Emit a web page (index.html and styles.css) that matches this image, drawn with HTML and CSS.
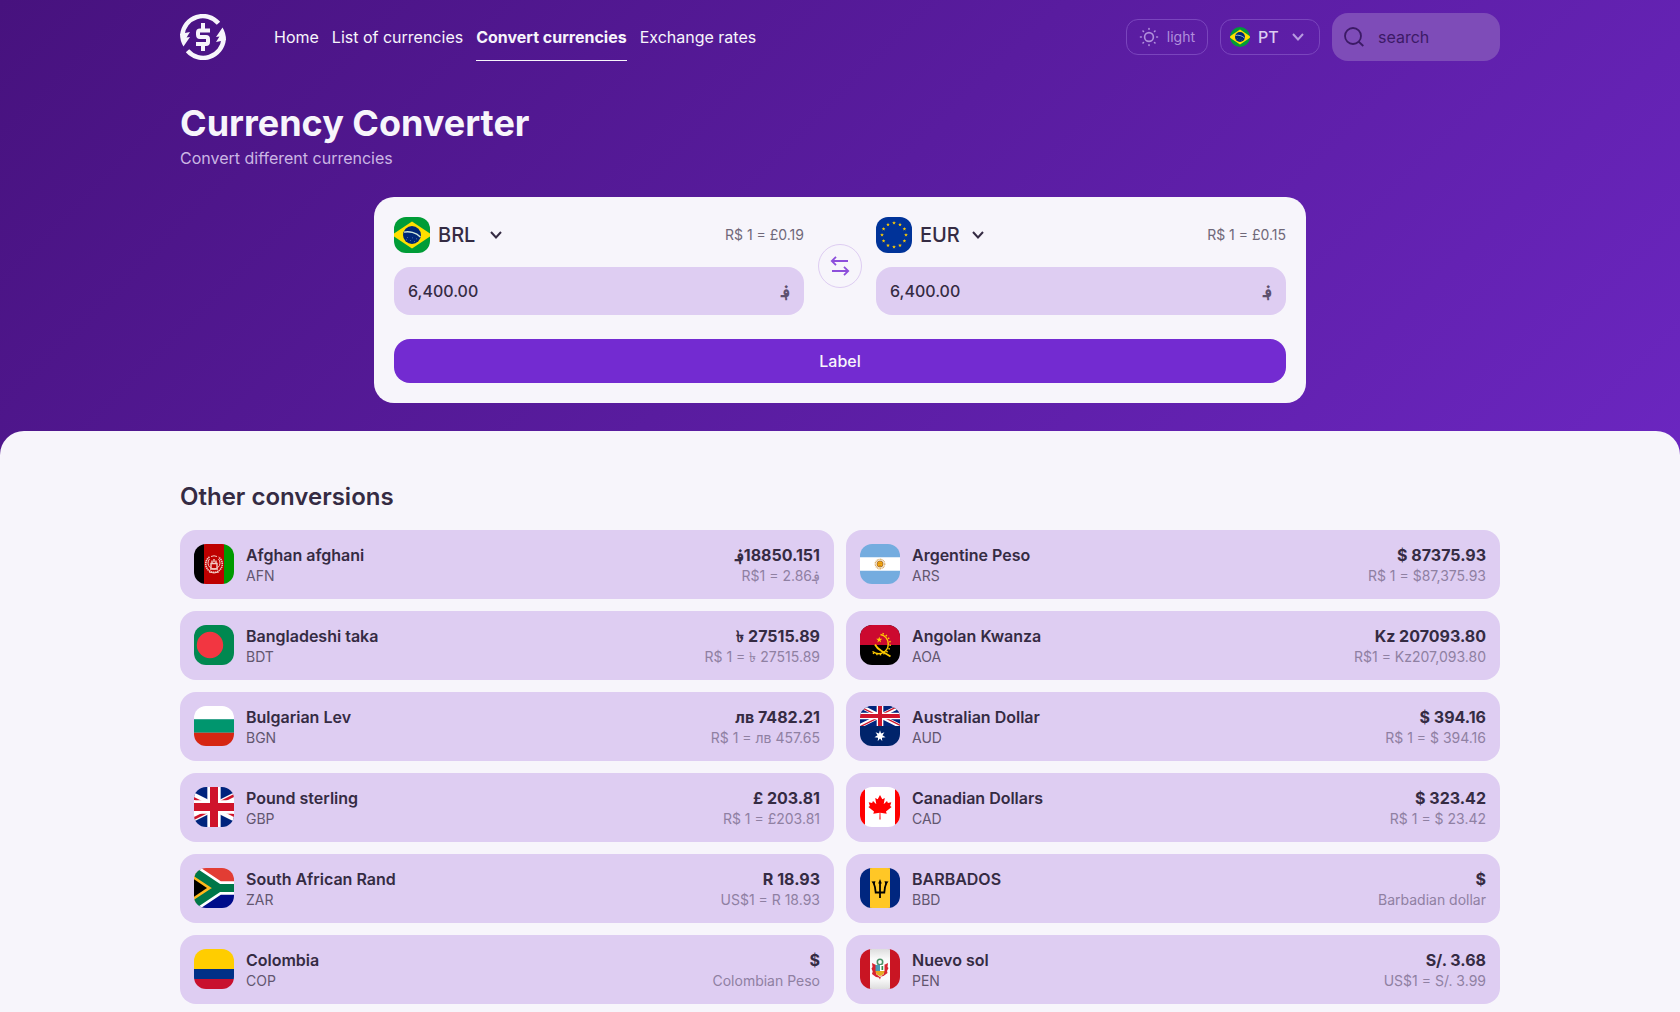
FILE: index.html
```
<!DOCTYPE html>
<html lang="en">
<head>
  <meta charset="utf-8">
  <meta name="viewport" content="width=device-width, initial-scale=1">
  <title>Currency Converter</title>
  <link rel="stylesheet" href="styles.css">
</head>
<body>

<svg class="sprite" width="0" height="0" aria-hidden="true">
  <symbol id="flag-br" viewBox="0 0 36 36">
    <path fill="#009c37" d="M0 0h36v36H0z"/>
    <path fill="#ffdf00" d="M18 4.500L36 16.500v3L18 31.500L0 19.500v-3z"/>
    <circle cx="18" cy="18" r="9" fill="#002776"/>
    <path fill="none" stroke="#cfe8dc" stroke-width="1.300" d="M10 15.200c5-1.300 12 .3 16.400 4.800"/>
    <path fill="#8fa3d0" d="M13 20h.7v.7H13zM16 23h.7v.7H16zM20 24h.7v.7H20zM12 22.500h.7v.7H12zM22 21.500h.7v.7H22zM18 20.500h.7v.7H18z"/>
  </symbol>
  <symbol id="union" viewBox="0 0 60 30">
    <clipPath id="union-clip"><path d="M30 15h30v15zv15H0zH0V0zV0h30z"/></clipPath>
    <path fill="#00247d" d="M0 0h60v30H0z"/>
    <path stroke="#fff" stroke-width="6" d="M0 0l60 30m0-30L0 30"/>
    <path stroke="#cf142b" stroke-width="4" clip-path="url(#union-clip)" d="M0 0l60 30m0-30L0 30"/>
    <path stroke="#fff" stroke-width="10" d="M30 0v30M0 15h60"/>
    <path stroke="#cf142b" stroke-width="6" d="M30 0v30M0 15h60"/>
  </symbol>
  <symbol id="star" viewBox="-10 -10 20 20">
    <path d="M0-10L2.300-3.200h7.200L3.700 1.200l2.200 6.900L0 3.900l-5.900 4.200 2.200-6.900-5.800-4.400h7.200z"/>
  </symbol>
</svg>

<div class="hero">
  <header class="container topbar">
    <a class="logo" href="#" aria-label="Currency Converter">
      <svg viewBox="0 0 46 46" width="46" height="46" fill="none">
        <path stroke="#f7f5fb" stroke-width="4.500" d="M2.300 21A20.700 20.700 0 0 1 38.500 9.200M43.700 25A20.700 20.700 0 0 1 7.500 36.800"/>
        <path fill="#f7f5fb" d="M0 20l10-2-3.500 5.500L10 23 3.500 32.500Q0 27 0 20zM46 26l-10 2 3.500-5.500L36 23l6.500-9.500Q46 19 46 26z"/>
        <path stroke="#f7f5fb" stroke-width="4" d="M30 16.500H20q-2 0-2 2v2q0 2.500 2 2.500h6q2 0 2 2v3q0 2-2 2H16M23 9v8M23 29v8"/>
      </svg>
    </a>
    <nav class="nav">
      <a href="#">Home</a>
      <a href="#">List of currencies</a>
      <a class="active" href="#">Convert currencies</a>
      <a href="#">Exchange rates</a>
    </nav>
    <div class="tools">
      <button class="pill theme" type="button">
        <svg viewBox="0 0 20 20" width="20" height="20" fill="none" stroke="currentColor" stroke-width="1.600" stroke-linecap="round">
          <circle cx="10" cy="10" r="4.400"/>
          <path d="M10 1.500v.8M10 17.700v.8M1.500 10h.8M17.700 10h.8M4 4l.5.500M15.500 15.500l.5.500M4 16l.5-.5M15.500 4.500L16 4"/>
        </svg>
        light
      </button>
      <div class="pill lang">
        <svg class="lang-flag" width="20" height="20"><use href="#flag-br"/></svg>
        <select aria-label="Language"><option>PT</option><option>EN</option></select>
        <svg class="chevron" viewBox="0 0 12 8" width="12" height="8"><path d="M1 1l5 5.500L11 1"/></svg>
      </div>
      <div class="search">
        <svg viewBox="0 0 20 20" width="20" height="20" fill="none" stroke="currentColor" stroke-width="1.800"><circle cx="9" cy="9" r="8"/><path d="M14.500 14.500L19.300 19"/></svg>
        <input type="search" placeholder="search" aria-label="Search">
      </div>
    </div>
  </header>

  <div class="container intro">
    <h1>Currency Converter</h1>
    <p>Convert different currencies</p>
  </div>

  <form class="converter">
    <div class="pair">
      <div class="side">
        <div class="side-head">
          <svg class="side-flag" width="36" height="36"><use href="#flag-br"/></svg>
          <select aria-label="From currency"><option>BRL</option><option>EUR</option></select>
          <svg class="chevron" viewBox="0 0 12 8" width="12" height="8"><path d="M1 1l5 5.500L11 1"/></svg>
          <span class="rate">R$ 1 = £0.19</span>
        </div>
        <div class="field">
          <input type="text" value="6,400.00" aria-label="Amount in BRL">
          <span class="sign">؋</span>
        </div>
      </div>
      <button class="swap" type="button" aria-label="Swap currencies">
        <svg viewBox="0 0 20 20" width="20" height="20" fill="none" stroke="currentColor" stroke-width="1.800"><path d="M18 5H2M6 .8L1.800 5 6 9.200M2 15h16M14 10.800l4.200 4.200-4.200 4.200"/></svg>
      </button>
      <div class="side">
        <div class="side-head">
          <svg class="side-flag" viewBox="0 0 36 36" width="36" height="36">
            <path fill="#039" d="M0 0h36v36H0z"/>
            <g fill="#fc0">
              <use href="#star" x="16" y="4" width="4" height="4"/>
              <use href="#star" x="22" y="5.600" width="4" height="4"/>
              <use href="#star" x="26.400" y="10" width="4" height="4"/>
              <use href="#star" x="28" y="16" width="4" height="4"/>
              <use href="#star" x="26.400" y="22" width="4" height="4"/>
              <use href="#star" x="22" y="26.400" width="4" height="4"/>
              <use href="#star" x="16" y="28" width="4" height="4"/>
              <use href="#star" x="10" y="26.400" width="4" height="4"/>
              <use href="#star" x="5.600" y="22" width="4" height="4"/>
              <use href="#star" x="4" y="16" width="4" height="4"/>
              <use href="#star" x="5.600" y="10" width="4" height="4"/>
              <use href="#star" x="10" y="5.600" width="4" height="4"/>
            </g>
          </svg>
          <select aria-label="To currency"><option>EUR</option><option>BRL</option></select>
          <svg class="chevron" viewBox="0 0 12 8" width="12" height="8"><path d="M1 1l5 5.500L11 1"/></svg>
          <span class="rate">R$ 1 = £0.15</span>
        </div>
        <div class="field">
          <input type="text" value="6,400.00" aria-label="Amount in EUR">
          <span class="sign">؋</span>
        </div>
      </div>
    </div>
    <button class="submit" type="button">Label</button>
  </form>
</div>

<main class="panel">
  <div class="container">
    <h2>Other conversions</h2>
    <ul class="list">
      <li class="item">
        <svg class="flag" viewBox="0 0 40 40">
          <path d="M0 0h10v40H0z"/><path fill="#be0000" d="M10 0h20v40H10z"/><path fill="#009a00" d="M30 0h10v40H30z"/>
          <g fill="none" stroke="#f3cdc6">
            <path stroke-width="1.600" stroke-dasharray="1.400 .6" d="M15.500 13a8.300 8.300 0 1 0 9 0"/>
            <path d="M15.500 15a6 6 0 1 0 9 0M17 12.500a7 7 0 0 1 6 0"/>
            <path stroke-width="1.400" d="M17 24v-4.500h6V24M16 25h8M18 19v-2.500M22 19v-2.500M20 15v3"/>
            <path d="M15 28q5 2 10 0"/>
          </g>
        </svg>
        <div class="name"><strong>Afghan afghani</strong><span>AFN</span></div>
        <div class="value"><strong><bdi>؋</bdi>18850.151</strong><span>R$1 = 2.86؋</span></div>
      </li>
      <li class="item">
        <svg class="flag" viewBox="0 0 40 40">
          <path fill="#74acdf" d="M0 0h40v40H0z"/><path fill="#fff" d="M0 13.300h40v13.400H0z"/>
          <circle cx="20" cy="20" r="4.600" fill="none" stroke="#dcae6a" stroke-width="1.600" stroke-dasharray="1 .5"/>
          <circle cx="20" cy="20" r="3" fill="#f6a90e" stroke="#a06321" stroke-width=".8"/>
          <path fill="#a06321" d="M18.500 19.200h1v.6h-1zM20.500 19.200h1v.6h-1zM19.200 21h1.600v.5h-1.600z"/>
        </svg>
        <div class="name"><strong>Argentine Peso</strong><span>ARS</span></div>
        <div class="value"><strong>$ 87375.93</strong><span>R$ 1 = $87,375.93</span></div>
      </li>
      <li class="item">
        <svg class="flag" viewBox="0 0 40 40"><path fill="#008850" d="M0 0h40v40H0z"/><circle cx="16" cy="20" r="13.200" fill="#f23641"/></svg>
        <div class="name"><strong>Bangladeshi taka</strong><span>BDT</span></div>
        <div class="value"><strong>৳ 27515.89</strong><span>R$ 1 = ৳ 27515.89</span></div>
      </li>
      <li class="item">
        <svg class="flag" viewBox="0 0 40 40">
          <path d="M0 0h40v40H0z"/><path fill="#cc092f" d="M0 0h40v20H0z"/>
          <g fill="none" stroke="#ffcb00">
            <path stroke-width="1.500" d="M20.500 9.400A9.800 9.800 0 0 1 21.500 28.300Q17 29.500 12.500 26.500"/>
            <path stroke-width="1.600" stroke-dasharray="1.400 2.200" d="M22.500 8.600A10.800 10.800 0 0 1 22.500 29.300Q17 30.500 12 27.500"/>
            <path stroke-width="1.800" d="M15 19.500q2 4 6.500 6.500l9 5.500"/>
          </g>
          <use href="#star" x="16" y="11.500" width="6.500" height="6.500" fill="#ffcb00"/>
        </svg>
        <div class="name"><strong>Angolan Kwanza</strong><span>AOA</span></div>
        <div class="value"><strong>Kz 207093.80</strong><span>R$1 = Kz207,093.80</span></div>
      </li>
      <li class="item">
        <svg class="flag" viewBox="0 0 40 40"><path fill="#fff" d="M0 0h40v13.300H0z"/><path fill="#00966e" d="M0 13.300h40v13.400H0z"/><path fill="#d62612" d="M0 26.700h40V40H0z"/></svg>
        <div class="name"><strong>Bulgarian Lev</strong><span>BGN</span></div>
        <div class="value"><strong>лв 7482.21</strong><span>R$ 1 = лв 457.65</span></div>
      </li>
      <li class="item">
        <svg class="flag" viewBox="0 0 40 40">
          <path fill="#00246b" d="M0 0h40v40H0z"/>
          <use href="#union" width="40" height="20"/>
          <path fill="#fff" d="M20 24.200l1.100 3.400 3.300-1.300-1.900 3 3 1.900-3.600.5.400 3.500-2.300-2.600-2.300 2.600.4-3.500-3.600-.5 3-1.900-1.900-3 3.300 1.300z"/>
        </svg>
        <div class="name"><strong>Australian Dollar</strong><span>AUD</span></div>
        <div class="value"><strong>$ 394.16</strong><span>R$ 1 = $ 394.16</span></div>
      </li>
      <li class="item">
        <svg class="flag" viewBox="0 0 40 40"><use href="#union" x="-20" width="80" height="40"/></svg>
        <div class="name"><strong>Pound sterling</strong><span>GBP</span></div>
        <div class="value"><strong>£ 203.81</strong><span>R$ 1 = £203.81</span></div>
      </li>
      <li class="item">
        <svg class="flag" viewBox="0 0 40 40">
          <path fill="#fff" d="M0 0h40v40H0z"/>
          <path fill="red" d="M0 0h5v40H0zM35 0h5v40h-5zM20 8l2.300 4.200 2.500-1.200-1.100 6.200 3.300-3.200.9 1.900 3.400-.6-1.200 3.600 1.500 1-5.600 4.600.7 2.200-6.300-.9.200 6.700h-1.200l.2-6.700-6.300.9.700-2.200L8.400 19.900l1.500-1-1.200-3.600 3.400.6.900-1.900 3.300 3.200-1.100-6.200 2.500 1.200z"/>
        </svg>
        <div class="name"><strong>Canadian Dollars</strong><span>CAD</span></div>
        <div class="value"><strong>$ 323.42</strong><span>R$ 1 = $ 23.42</span></div>
      </li>
      <li class="item">
        <svg class="flag" viewBox="0 0 40 40">
          <path fill="#e23d34" d="M0 0h40v20H0z"/><path fill="#000c8a" d="M0 20h40v20H0z"/>
          <path fill="none" stroke="#fff" stroke-width="13.300" d="M-11-4l36 24h20M-11 44l36-24"/>
          <path fill="#ffb81c" d="M-5 0l30 20L-5 40z"/>
          <path fill="none" stroke="#007749" stroke-width="8" d="M-11-4l36 24h20M-11 44l36-24"/>
          <path d="M0 11.300L13 20 0 28.700z"/>
        </svg>
        <div class="name"><strong>South African Rand</strong><span>ZAR</span></div>
        <div class="value"><strong>R 18.93</strong><span>US$1 = R 18.93</span></div>
      </li>
      <li class="item">
        <svg class="flag" viewBox="0 0 40 40">
          <path fill="#00267f" d="M0 0h40v40H0z"/><path fill="#ffc726" d="M10 0h20v40H10z"/>
          <path fill="none" stroke="#000" stroke-width="1.800" d="M20 14v16M13.500 14.500q1.800 4 2.200 10h8.600q.4-6 2.200-10"/>
          <path d="M20 11l1.800 4.500h-3.600zM11.500 13.500l4-.2-1.200 4zM28.500 13.500l-4-.2 1.200 4z"/>
        </svg>
        <div class="name"><strong>BARBADOS</strong><span>BBD</span></div>
        <div class="value"><strong>$</strong><span>Barbadian dollar</span></div>
      </li>
      <li class="item">
        <svg class="flag" viewBox="0 0 40 40"><path fill="#ffcd00" d="M0 0h40v20H0z"/><path fill="#003087" d="M0 20h40v10H0z"/><path fill="#c8102e" d="M0 30h40v10H0z"/></svg>
        <div class="name"><strong>Colombia</strong><span>COP</span></div>
        <div class="value"><strong>$</strong><span>Colombian Peso</span></div>
      </li>
      <li class="item">
        <svg class="flag" viewBox="0 0 40 40">
          <linearGradient id="pe" x2="0" y2="1"><stop stop-color="#ddd"/><stop offset=".25" stop-color="#fafafa"/><stop offset=".75" stop-color="#fafafa"/><stop offset="1" stop-color="#ddd"/></linearGradient>
          <path fill="#c91523" d="M0 0h40v40H0z"/><path fill="url(#pe)" d="M10 0h20v40H10z"/>
          <path fill="#d8232f" d="M12 14l4 2v9l4 3 4-3v-9l4-2-.5 4 1 1-1.500 3 .5 2-4 3-2.500.5L20 30.500l-1.200-2L16 28l-4-3 .7-2.500-1.200-3 1-1.500z"/>
          <circle cx="20" cy="13" r="2.700" fill="none" stroke="#4d9469" stroke-width="1.600"/>
          <path fill="#4b9bb5" d="M15.500 16h4.500v6h-4.500z"/><path fill="#fff" d="M20 16h4.500v6H20z"/><path fill="#388e4c" d="M21.500 17h1.700v4h-1.700z"/>
          <path fill="#e5a923" d="M15.500 22h9q0 4-4.500 5-4.500-1-4.500-5z"/>
        </svg>
        <div class="name"><strong>Nuevo sol</strong><span>PEN</span></div>
        <div class="value"><strong>S/. 3.68</strong><span>US$1 = S/. 3.99</span></div>
      </li>
    </ul>
  </div>
</main>

</body>
</html>
```

FILE: styles.css
```
* { box-sizing: border-box; }

body {
  margin: 0;
  background: #f7f5fb;
  color: #352b43;
  font-family: Inter, "Noto Sans", "DejaVu Sans", sans-serif;
  font-size: 16px;
  line-height: 24px;
}

a { color: inherit; text-decoration: none; }
h1, h2, p, ul { margin: 0; padding: 0; }
button, input, select { font: inherit; color: inherit; }
button { cursor: pointer; }

.sprite { position: absolute; }

.container {
  width: 100%;
  max-width: 1368px;
  margin: 0 auto;
  padding: 0 24px;
}

/* hero */
.hero {
  padding: 13px 0 56px;
  background: linear-gradient(135deg, #47127e, #6b26c0);
  color: #f7f5fb;
}

.topbar {
  display: flex;
  align-items: center;
}
.logo { display: flex; }

.nav {
  display: flex;
  gap: 13px;
  margin-left: 48px;
}
.nav a {
  padding: 12px 0 11px;
  border-bottom: 1px solid transparent;
}
.nav .active {
  border-color: #f7f5fb;
  font-weight: 700;
}

.tools {
  display: flex;
  align-items: center;
  gap: 12px;
  margin-left: auto;
}
.pill {
  display: flex;
  align-items: center;
  height: 36px;
  padding: 0 12px;
  border: 1px solid #7a45bd;
  border-radius: 12px;
  background: transparent;
}
.theme {
  gap: 8px;
  color: #b08fdc;
  font-size: 14px;
}
.lang {
  padding: 0 15px 0 9px;
  color: #dccdf1;
  font-weight: 500;
}
.lang-flag { border-radius: 50%; }

select {
  appearance: none;
  width: 60px;
  padding: 0 0 0 8px;
  border: 0;
  background: transparent;
}
.lang select { width: 42px; }
.chevron {
  fill: none;
  stroke: currentColor;
  stroke-width: 2;
  pointer-events: none;
}
.lang .chevron { color: #b79be0; }

.search {
  display: flex;
  align-items: center;
  gap: 14px;
  width: 168px;
  height: 48px;
  padding: 0 12px;
  border-radius: 16px;
  background: #7e4cb8;
  color: #3c1a66;
}
.search svg { flex: none; }

input {
  min-width: 0;
  width: 100%;
  padding: 0;
  border: 0;
  outline: 0;
  background: transparent;
}
input::placeholder { color: inherit; opacity: 1; }

.intro { padding-top: 40px; }
h1 {
  font-size: 36px;
  line-height: 45px;
  font-weight: 700;
}
.intro p { color: #cbb6e4; }

/* converter */
.converter {
  width: calc(100% - 48px);
  max-width: 932px;
  margin: 27px auto 0;
  padding: 20px;
  border-radius: 20px;
  background: #f7f5fb;
  color: #352b43;
}
.pair {
  display: flex;
  align-items: center;
  gap: 14px;
}
.side { flex: 1; min-width: 0; }
.side-head {
  display: flex;
  align-items: center;
  margin-bottom: 14px;
}
.side-flag { border-radius: 12px; }
.side select {
  font-size: 20px;
  font-weight: 500;
}
.rate {
  margin-left: auto;
  color: #6f6879;
  font-size: 14px;
}
.field {
  display: flex;
  align-items: center;
  height: 48px;
  padding: 0 14px;
  border-radius: 16px;
  background: #decdf2;
  font-weight: 500;
}
.sign {
  color: #5d506e;
  font-weight: 700;
}
.swap {
  display: grid;
  place-items: center;
  width: 44px;
  height: 44px;
  padding: 0;
  border: 1px solid #decdf2;
  border-radius: 50%;
  background: transparent;
  color: #8d4fdb;
}
.submit {
  width: 100%;
  height: 44px;
  margin-top: 24px;
  border: 0;
  border-radius: 16px;
  background: #732bd1;
  color: #f7f5fb;
  font-weight: 500;
}

/* conversions */
.panel {
  position: relative;
  margin-top: -28px;
  padding: 48px 0 24px;
  border-radius: 24px 24px 0 0;
  background: #f7f5fb;
}
h2 {
  margin-bottom: 15px;
  font-size: 24px;
  line-height: 36px;
  font-weight: 600;
}
.list {
  display: grid;
  grid-template-columns: 1fr 1fr;
  gap: 12px;
  list-style: none;
}
.item {
  display: flex;
  align-items: flex-start;
  gap: 12px;
  padding: 14px;
  border-radius: 16px;
  background: #decdf2;
}
.flag {
  width: 40px;
  height: 40px;
  border-radius: 12px;
}
.item strong, .item span { display: block; }
.item strong {
  font-weight: 600;
  line-height: 22px;
}
.item span {
  color: #62566f;
  font-size: 14px;
  line-height: 19px;
}
.value {
  margin-left: auto;
  text-align: right;
}
.item .value strong { font-weight: 700; }
.item .value span { color: #8f80a2; }

@media (max-width: 900px) {
  .topbar, .nav { flex-wrap: wrap; }
  .pair { flex-direction: column; }
  .side { width: 100%; }
  .list { grid-template-columns: 1fr; }
}
```
